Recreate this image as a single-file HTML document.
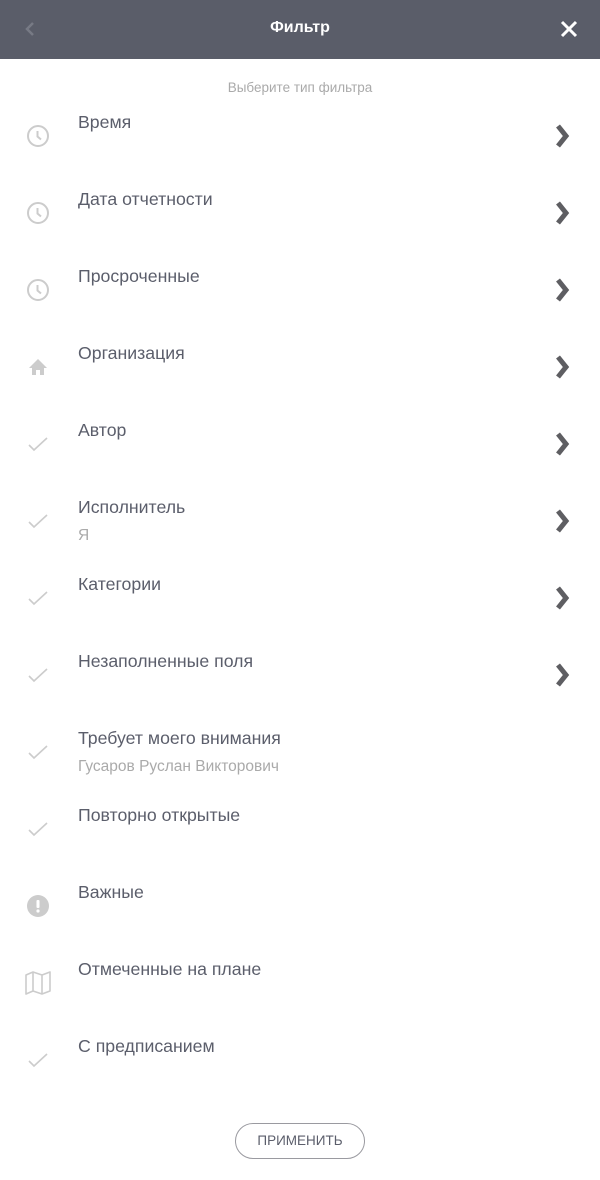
<!DOCTYPE html>
<html><head><meta charset="utf-8"><style>
body{margin:0;width:600px;height:1180px;background:#fff;font-family:"Liberation Sans",sans-serif;position:relative;overflow:hidden}
.hdr{position:absolute;left:0;top:0;width:600px;height:59px;background:#5a5d69}
.t{position:absolute;left:0;width:600px;text-align:center;top:19px;color:#fff;font-size:16px;font-weight:bold}
.sub{position:absolute;top:80px;width:600px;text-align:center;color:#aaa;font-size:13.5px}
.row{position:absolute;left:0;width:600px;height:77px}
.lab{position:absolute;left:78px;top:-9px;font-size:17.7px;color:#5b5e6b}
.s{position:absolute;left:78px;top:21px;font-size:15.5px;color:#aaa}
.ic{position:absolute;left:26px;top:3px;width:24px;height:24px}
.ch{position:absolute;left:554px;top:2px}
.btn{position:absolute;left:235px;top:1123px;width:128px;height:34px;border:1px solid #9a9aa0;border-radius:18px;text-align:center;line-height:34px;font-size:13.5px;color:#5b5e6b}
</style></head><body>
<div class="hdr">
<svg style="position:absolute;left:24px;top:21px" width="12" height="16"><path d="M9 2L3 8l6 6" stroke="#777a85" stroke-width="2.5" fill="none"/></svg>
<div class="t">Фильтр</div>
<svg style="position:absolute;left:560px;top:20px" width="18" height="18"><path d="M2 2L16 16M16 2L2 16" stroke="#fff" stroke-width="3"/></svg>
</div>
<div class="sub">Выберите тип фильтра</div>
<svg width="0" height="0" style="position:absolute"><defs>
<g id="clk"><circle cx="12" cy="12" r="10" fill="none" stroke="#ccc" stroke-width="2"/><path d="M11.5 7v5.5l3.5 3" stroke="#ccc" stroke-width="2" fill="none"/></g>
<g id="chk"><path d="M3 13l5 5L21 6" stroke="#ccc" stroke-width="1.6" fill="none"/></g>
<g id="chv"><path d="M4 3l8 10-8 10" stroke="#5e5e62" stroke-width="5" fill="none"/></g>
</defs></svg>

<div class="row" style="top:121px"><svg class="ic" viewBox="0 0 24 24"><use href="#clk"/></svg><div class="lab">Время</div><svg class="ch" width="18" height="26"><use href="#chv"/></svg></div>
<div class="row" style="top:198px"><svg class="ic" viewBox="0 0 24 24"><use href="#clk"/></svg><div class="lab">Дата отчетности</div><svg class="ch" width="18" height="26"><use href="#chv"/></svg></div>
<div class="row" style="top:275px"><svg class="ic" viewBox="0 0 24 24"><use href="#clk"/></svg><div class="lab">Просроченные</div><svg class="ch" width="18" height="26"><use href="#chv"/></svg></div>
<div class="row" style="top:352px"><svg class="ic" viewBox="0 0 24 24"><path d="M12 4L3 13h3v7h4v-5h4v5h4v-7h3z" fill="#ccc"/></svg><div class="lab">Организация</div><svg class="ch" width="18" height="26"><use href="#chv"/></svg></div>
<div class="row" style="top:429px"><svg class="ic" viewBox="0 0 24 24"><use href="#chk"/></svg><div class="lab">Автор</div><svg class="ch" width="18" height="26"><use href="#chv"/></svg></div>
<div class="row" style="top:506px"><svg class="ic" viewBox="0 0 24 24"><use href="#chk"/></svg><div class="lab">Исполнитель</div><div class="s">Я</div><svg class="ch" width="18" height="26"><use href="#chv"/></svg></div>
<div class="row" style="top:583px"><svg class="ic" viewBox="0 0 24 24"><use href="#chk"/></svg><div class="lab">Категории</div><svg class="ch" width="18" height="26"><use href="#chv"/></svg></div>
<div class="row" style="top:660px"><svg class="ic" viewBox="0 0 24 24"><use href="#chk"/></svg><div class="lab">Незаполненные поля</div><svg class="ch" width="18" height="26"><use href="#chv"/></svg></div>
<div class="row" style="top:737px"><svg class="ic" viewBox="0 0 24 24"><use href="#chk"/></svg><div class="lab">Требует моего внимания</div><div class="s">Гусаров Руслан Викторович</div></div>
<div class="row" style="top:814px"><svg class="ic" viewBox="0 0 24 24"><use href="#chk"/></svg><div class="lab">Повторно открытые</div></div>
<div class="row" style="top:891px"><svg class="ic" viewBox="0 0 24 24"><circle cx="12" cy="12" r="11" fill="#ccc"/><rect x="10.5" y="6" width="3" height="8" rx="1" fill="#fff"/><circle cx="12" cy="17" r="1.6" fill="#fff"/></svg><div class="lab">Важные</div></div>
<div class="row" style="top:968px"><svg class="ic" style="left:24px;width:28px;height:28px;top:1px" viewBox="0 0 28 28"><path d="M2 6l7-3 9 3 8-3v19l-8 3-9-3-7 3zM9 3v19M18 6v19" stroke="#ccc" stroke-width="1.6" fill="none" stroke-linejoin="round"/></svg><div class="lab">Отмеченные на плане</div></div>
<div class="row" style="top:1045px"><svg class="ic" viewBox="0 0 24 24"><use href="#chk"/></svg><div class="lab">С предписанием</div></div>
<div class="btn">ПРИМЕНИТЬ</div>
</body></html>
